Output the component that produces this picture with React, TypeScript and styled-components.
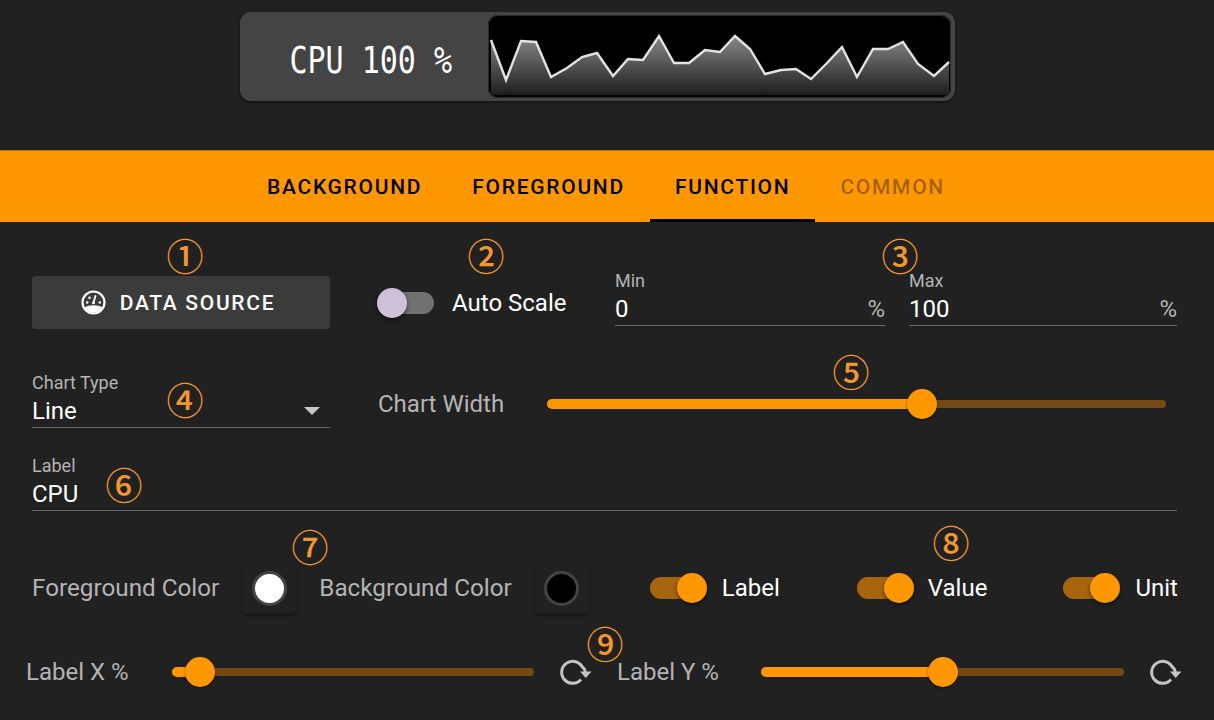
import * as React from "react";
import styled, { createGlobalStyle } from "styled-components";

const orange = "#ff9800";

const chartPoints: [number, number][] = [
  [3, 25], [18, 65], [33, 26], [48, 27], [63, 62], [79, 53], [94, 42], [109, 38],
  [125, 61], [140, 44], [155, 45], [171, 21], [186, 48], [201, 48], [217, 35], [232, 37],
  [247, 21], [262, 34], [277, 59], [293, 55], [308, 54], [323, 64], [339, 48], [354, 32],
  [369, 62], [385, 34], [400, 34], [415, 27], [430, 49], [446, 61], [461, 47],
];

const GlobalStyle = createGlobalStyle`
  html, body {
    margin: 0;
    background: #212121;
    font-family: Roboto, "Liberation Sans", sans-serif;
    overflow: hidden;
  }
`;

const Page = styled.div`
  position: relative;
  width: 1214px;
  height: 720px;
  background: #212121;
  overflow: hidden;
`;

const Preview = styled.div`
  height: 150px;
  display: flex;
  justify-content: center;
  padding: 12px 19px 0 0;
  box-sizing: border-box;
`;

const Gauge = styled.div`
  width: 715px;
  height: 89px;
  display: flex;
  box-sizing: border-box;
  padding: 3px 4px 3px 0;
  background: #444;
  border-radius: 11px;
  box-shadow: 0 1px 3px rgba(0, 0, 0, 0.6);
`;

const GaugeText = styled.div`
  width: 248px;
  flex: none;
  display: flex;
  align-items: center;
  justify-content: flex-end;
  padding: 6px 36px 0 0;
  box-sizing: border-box;
  color: #fff;
  font-family: "DejaVu Sans Mono", monospace;
  font-size: 30px;
  white-space: pre;
`;

const GaugeValue = styled.span`
  display: inline-block;
  transform: scaleY(1.25);
`;

const ChartFrame = styled.div`
  flex: 1;
  background: #000;
  border-radius: 10px;
  overflow: hidden;
  box-shadow: inset 0 0 0 1px #2a2a2a;
`;

const ChartSvg = styled.svg`
  display: block;
  width: 100%;
  height: 100%;
`;

const TabBar = styled.div`
  height: 72px;
  box-sizing: border-box;
  padding-right: 2px;
  border-top: 1px solid #b5740f;
  background: ${orange};
  display: flex;
  justify-content: center;
`;

const Tab = styled.div<{ $active?: boolean; $disabled?: boolean }>`
  display: flex;
  align-items: center;
  box-sizing: border-box;
  padding: 3px 25px 0;
  font-size: 21px;
  font-weight: 500;
  letter-spacing: 1.72px;
  color: ${(p) => (p.$disabled ? "rgba(0, 0, 0, 0.38)" : "#000")};
  border-bottom: 3px solid ${(p) => (p.$active ? "#000" : "transparent")};
`;

const Form = styled.div`
  padding: 54px 37px 0 32px;
  display: flex;
  flex-direction: column;
`;

const TopRow = styled.div`
  display: flex;
  align-items: flex-start;
  height: 53px;
`;

const DataButton = styled.div`
  width: 298px;
  height: 53px;
  flex: none;
  display: flex;
  align-items: center;
  justify-content: center;
  gap: 14px;
  box-sizing: border-box;
  padding-right: 6px;
  background: #3b3b3b;
  border-radius: 4px;
  color: #fff;
  font-size: 21px;
  font-weight: 500;
  letter-spacing: 1.7px;
`;

const SwitchWrap = styled.div<{ $gap: number }>`
  display: flex;
  align-items: center;
  gap: ${(p) => p.$gap}px;
  color: #fff;
  font-size: 24px;
`;

const AutoScale = styled(SwitchWrap)`
  margin-left: 55px;
  height: 53px;
  width: 230px;
  flex: none;
`;

const SwitchTrack = styled.div<{ $on?: boolean }>`
  position: relative;
  width: 49px;
  height: 22px;
  flex: none;
  border-radius: 11px;
  background: ${(p) => (p.$on ? "#a5660e" : "#717171")};
`;

const SwitchThumb = styled.div<{ $on?: boolean }>`
  position: absolute;
  top: -4px;
  ${(p) => (p.$on ? "right: -8px;" : "left: -8px;")}
  width: 30px;
  height: 30px;
  border-radius: 50%;
  background: ${(p) => (p.$on ? orange : "#cfc1da")};
  box-shadow: 0 2px 4px rgba(0, 0, 0, 0.5);
`;

const Field = styled.div<{ $width?: number }>`
  width: ${(p) => (p.$width ? `${p.$width}px` : "auto")};
  height: 54px;
  flex: none;
  display: flex;
  flex-direction: column;
  justify-content: flex-end;
  box-sizing: border-box;
  border-bottom: 1px solid #6a6a6a;
  padding-bottom: 1px;
`;

const MinField = styled(Field)`
  margin-top: -4px;
`;

const MaxField = styled(MinField)`
  margin-left: 24px;
`;

const FieldLabel = styled.div`
  color: #b4b4b4;
  font-size: 18px;
  line-height: 20px;
  margin-bottom: 3px;
`;

const FieldValue = styled.div`
  display: flex;
  justify-content: space-between;
  align-items: center;
  color: #fff;
  font-size: 24px;
  line-height: 30px;
`;

const Adornment = styled.span`
  color: #b4b4b4;
  font-size: 24px;
`;

const Caret = styled.span`
  width: 0;
  height: 0;
  margin-right: 10px;
  border-left: 8px solid transparent;
  border-right: 8px solid transparent;
  border-top: 8px solid #c8c8c8;
`;

const WidthRow = styled.div`
  display: flex;
  align-items: center;
  margin-top: 45px;
  height: 54px;
`;

const WidthControls = styled.div`
  display: flex;
  align-items: center;
  margin-top: 6px;
`;

const SliderLabel = styled.div`
  color: #b4b4b4;
  font-size: 24px;
  white-space: nowrap;
`;

const ChartWidthLabel = styled(SliderLabel)`
  margin-left: 48px;
  width: 169px;
  flex: none;
`;

const SliderTrack = styled.div<{ $width: number }>`
  position: relative;
  width: ${(p) => p.$width}px;
  height: 8px;
  flex: none;
  border-radius: 4px;
  background: #744b13;
`;

const SliderFill = styled.div`
  position: absolute;
  left: 0;
  top: -1px;
  height: 10px;
  border-radius: 5px;
  background: ${orange};
`;

const SliderThumb = styled.div`
  position: absolute;
  top: 50%;
  width: 30px;
  height: 30px;
  margin: -15px 0 0 -15px;
  border-radius: 50%;
  background: ${orange};
  box-shadow: 0 1px 3px rgba(0, 0, 0, 0.5);
`;

const LabelField = styled(Field)`
  margin-top: 28px;
  height: 55px;
`;

const ColorRow = styled.div`
  display: flex;
  align-items: center;
  margin-top: 52px;
  height: 50px;
`;

const ColorLabel = styled(SliderLabel)`
  font-size: 24.25px;
`;

const ColorSwatchBox = styled.div`
  width: 54px;
  height: 51px;
  flex: none;
  display: flex;
  align-items: center;
  justify-content: center;
  margin-left: 23px;
  border-radius: 5px;
  box-shadow: 0 2px 3px rgba(0, 0, 0, 0.35);
`;

const ColorDot = styled.div<{ $color: string }>`
  width: 35px;
  height: 35px;
  box-sizing: border-box;
  border-radius: 50%;
  background: ${(p) => p.$color};
  border: 3px solid #444;
`;

const BackgroundLabel = styled(ColorLabel)`
  margin-left: 23px;
`;

const ToggleGroup = styled(SwitchWrap)<{ $left: number }>`
  margin-left: ${(p) => p.$left}px;
`;

const SliderRow = styled.div`
  display: flex;
  align-items: center;
  margin: 37px -7px 0 -6px;
  height: 44px;
`;

const AxisLabel = styled(SliderLabel)<{ $width: number; $left?: number }>`
  width: ${(p) => p.$width}px;
  margin-left: ${(p) => p.$left ?? 0}px;
  flex: none;
`;

const ResetIcon = styled.svg`
  flex: none;
  width: 34px;
  height: 34px;
  margin-left: 24px;
  color: #c4c4c4;
`;

const Mark = styled.span<{ $x: number; $y: number }>`
  position: absolute;
  left: ${(p) => p.$x}px;
  top: ${(p) => p.$y}px;
  width: 38px;
  text-align: center;
  line-height: 38px;
  font-family: "Noto Sans CJK JP", sans-serif;
  font-size: 37px;
  font-weight: 500;
  color: #f0982e;
`;

const GaugeIcon = () => (
  <svg width="25" height="25" viewBox="0 0 25 25" aria-hidden="true">
    <circle cx="12.5" cy="12.5" r="11" fill="none" stroke="#fff" strokeWidth="2.2" />
    <path d="M3.500 17.500c2-1.500 5-2.300 9-2.300s7 .8 9 2.300c-1.800 3-5 5.200-9 5.200s-7.200-2.200-9-5.200z" fill="#fff" />
    <path d="M12.500 12.500 14.500 6" stroke="#fff" strokeWidth="1.800" strokeLinecap="round" />
    <circle cx="12.500" cy="12.800" r="1.500" fill="#fff" />
    <circle cx="6.200" cy="12.500" r="1.200" fill="#fff" />
    <circle cx="8.500" cy="7.800" r="1.200" fill="#fff" />
    <circle cx="18.800" cy="12.500" r="1.200" fill="#fff" />
  </svg>
);

const Reset = () => (
  <ResetIcon viewBox="0 0 34 34" aria-hidden="true">
    <path d="M23 24.500A11 11 0 1 1 24 11.500Q27 14 27.500 17" fill="none" stroke="currentColor" strokeWidth="3" />
    <path d="M22 16.500h11.500L27.700 23z" fill="currentColor" />
  </ResetIcon>
);

const Slider = ({ width, value }: { width: number; value: number }) => (
  <SliderTrack $width={width}>
    <SliderFill style={{ width: value }} />
    <SliderThumb style={{ left: value }} />
  </SliderTrack>
);

const Toggle = ({ label, left, gap }: { label: string; left: number; gap: number }) => (
  <ToggleGroup $gap={gap} $left={left}>
    <SwitchTrack $on>
      <SwitchThumb $on />
    </SwitchTrack>
    {label}
  </ToggleGroup>
);

const marks: [string, number, number][] = [
  ["①", 166, 236], ["②", 467, 236], ["③", 881, 236], ["④", 166, 380], ["⑤", 832, 352],
  ["⑥", 105, 465], ["⑦", 291, 527], ["⑧", 932, 523], ["⑨", 586, 624],
];

const App = () => {
  const line = chartPoints.map(([x, y]) => `${x},${y}`).join(" ");
  const area = `3,80 ${line} 461,80`;

  return (
    <Page>
      <GlobalStyle />
      <Preview>
        <Gauge>
          <GaugeText>
            <GaugeValue>CPU 100 %</GaugeValue>
          </GaugeText>
          <ChartFrame>
            <ChartSvg viewBox="0 0 463 83" preserveAspectRatio="none">
              <defs>
                <linearGradient id="fade" x1="0" y1="18" x2="0" y2="80" gradientUnits="userSpaceOnUse">
                  <stop offset="0" stopColor="#8c8c8c" />
                  <stop offset="1" stopColor="#1e1e1e" />
                </linearGradient>
              </defs>
              <polygon points={area} fill="url(#fade)" />
              <polyline points={line} fill="none" stroke="#e2e2e2" strokeWidth="2.4" />
            </ChartSvg>
          </ChartFrame>
        </Gauge>
      </Preview>

      <TabBar>
        <Tab>BACKGROUND</Tab>
        <Tab>FOREGROUND</Tab>
        <Tab $active>FUNCTION</Tab>
        <Tab $disabled>COMMON</Tab>
      </TabBar>

      <Form>
        <TopRow>
          <DataButton>
            <GaugeIcon />
            DATA SOURCE
          </DataButton>
          <AutoScale $gap={18}>
            <SwitchTrack>
              <SwitchThumb />
            </SwitchTrack>
            Auto Scale
          </AutoScale>
          <MinField $width={270}>
            <FieldLabel>Min</FieldLabel>
            <FieldValue>
              0<Adornment>%</Adornment>
            </FieldValue>
          </MinField>
          <MaxField $width={268}>
            <FieldLabel>Max</FieldLabel>
            <FieldValue>
              100<Adornment>%</Adornment>
            </FieldValue>
          </MaxField>
        </TopRow>

        <WidthRow>
          <Field $width={298}>
            <FieldLabel>Chart Type</FieldLabel>
            <FieldValue>
              Line
              <Caret />
            </FieldValue>
          </Field>
          <WidthControls>
            <ChartWidthLabel>Chart Width</ChartWidthLabel>
            <Slider width={619} value={375} />
          </WidthControls>
        </WidthRow>

        <LabelField>
          <FieldLabel>Label</FieldLabel>
          <FieldValue>CPU</FieldValue>
        </LabelField>

        <ColorRow>
          <ColorLabel>Foreground Color</ColorLabel>
          <ColorSwatchBox>
            <ColorDot $color="#fff" />
          </ColorSwatchBox>
          <BackgroundLabel>Background Color</BackgroundLabel>
          <ColorSwatchBox>
            <ColorDot $color="#000" />
          </ColorSwatchBox>
          <Toggle label="Label" left={61} gap={23} />
          <Toggle label="Value" left={77} gap={22} />
          <Toggle label="Unit" left={76} gap={23} />
        </ColorRow>

        <SliderRow>
          <AxisLabel $width={146}>Label X %</AxisLabel>
          <Slider width={362} value={28} />
          <Reset />
          <AxisLabel $width={144} $left={25}>Label Y %</AxisLabel>
          <Slider width={363} value={182} />
          <Reset />
        </SliderRow>
      </Form>

      {marks.map(([glyph, x, y]) => (
        <Mark key={glyph} $x={x} $y={y}>
          {glyph}
        </Mark>
      ))}
    </Page>
  );
};

export default App;
